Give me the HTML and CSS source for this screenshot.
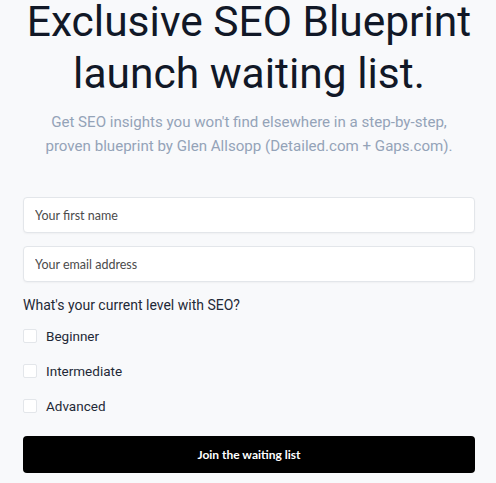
FILE: index.html
```html
<!DOCTYPE html>
<html lang="en">
<head>
    <meta charset="UTF-8">
    <meta name="viewport" content="width=device-width, initial-scale=1.0">
    <title>SEO Blueprint Waiting List</title>
    <link rel="stylesheet" href="styles.css">
</head>
<body>
    <div class="signup">
        <h1>Exclusive SEO Blueprint<br>launch waiting list.</h1>
        <p class="intro">Get SEO insights you won't find elsewhere in a step-by-step,<br>proven blueprint by Glen Allsopp (Detailed.com + Gaps.com).</p>

        <form class="signup-form">
            <input type="text" placeholder="Your first name">
            <input type="text" placeholder="Your email address">

            <div class="level-group">
                <p class="level-title">What's your current level with SEO?</p>
                <label class="level-option"><input type="checkbox"> Beginner</label>
                <label class="level-option"><input type="checkbox"> Intermediate</label>
                <label class="level-option"><input type="checkbox"> Advanced</label>
            </div>

            <button type="button">Join the waiting list</button>
        </form>
    </div>
</body>
</html>
```

FILE: styles.css
```css
body {
    font-family: 'Roboto', sans-serif;
    background-color: #f8f9fb;
    margin: 0;
    padding: 0;
}

.signup {
    padding: 0 21px 0 23px;
}

h1 {
    font-family: 'Roboto', sans-serif;
    font-weight: 400;
    font-size: 42.5px;
    line-height: 52px;
    color: #111827;
    text-align: center;
    white-space: nowrap;
    margin: -4px 0 0;
}

.intro {
    font-size: 15.1px;
    line-height: 24px;
    color: #94a3b8;
    text-align: center;
    white-space: nowrap;
    margin: 10px 0 0;
}

.signup-form {
    margin-top: 39px;
    display: flex;
    flex-direction: column;
}

.signup-form input[type="text"] {
    height: 36px;
    padding: 0 11px;
    margin-bottom: 13px;
    border: 1px solid #e3e6ea;
    border-radius: 4px;
    background-color: #ffffff;
    font-family: 'Lato', sans-serif;
    font-size: 12.5px;
    box-sizing: border-box;
    box-shadow: 0 1px 2px rgba(0, 0, 0, 0.04);
}

.signup-form input::placeholder {
    color: #4b4b4b;
}

.level-group {
    display: flex;
    flex-direction: column;
}

.level-title {
    font-size: 14px;
    color: #1f2937;
    margin: 2px 0 5px;
}

.level-option {
    display: flex;
    align-items: center;
    gap: 9px;
    height: 35px;
    font-size: 13.5px;
    color: #1f2937;
}

.level-option input {
    appearance: none;
    width: 14px;
    height: 14px;
    margin: 0;
    border: 1px solid #e3e6ea;
    border-radius: 2px;
    background-color: #ffffff;
}

button {
    margin-top: 13px;
    height: 37px;
    background-color: #000000;
    color: #ffffff;
    border: none;
    border-radius: 4px;
    font-family: 'Lato', sans-serif;
    font-weight: 700;
    font-size: 12px;
    cursor: pointer;
}
```
